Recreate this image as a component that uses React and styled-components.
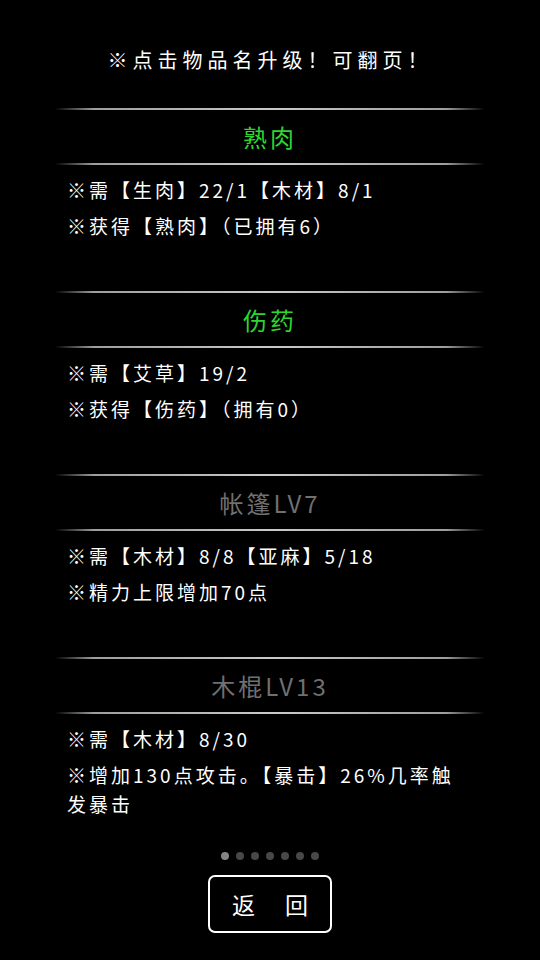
import React from "react";
import styled, { createGlobalStyle } from "styled-components";

const GlobalStyle = createGlobalStyle`
  html, body {
    margin: 0;
    padding: 0;
    background: #000;
  }
  body {
    font-family: "Noto Sans CJK SC", "Noto Sans", sans-serif;
    color: #fff;
  }
`;

const Page = styled.div`
  width: 540px;
  height: 960px;
  background: #000;
  display: flex;
  flex-direction: column;
  align-items: center;
  overflow: hidden;
`;

const Hint = styled.div`
  margin-top: 46px;
  margin-bottom: 34px;
  height: 28px;
  line-height: 28px;
  font-size: 20px;
  letter-spacing: 5px;
  color: #fff;
  text-align: center;
`;

const List = styled.div`
  width: 430px;
  display: flex;
  flex-direction: column;
  gap: 51px;
`;

const Section = styled.div`
  display: flex;
  flex-direction: column;
`;

const Divider = styled.div`
  height: 2px;
  background: linear-gradient(
    to right,
    rgba(160, 160, 160, 0) 0%,
    rgba(175, 175, 175, 0.9) 9%,
    #cacaca 50%,
    rgba(175, 175, 175, 0.9) 91%,
    rgba(160, 160, 160, 0) 100%
  );
`;

const Title = styled.div`
  height: 53px;
  line-height: 53px;
  text-align: center;
  font-size: 24px;
  letter-spacing: 3px;
  color: ${(p) => (p.$ready ? "#2fd62f" : "#707070")};
`;

const Body = styled.div`
  padding: 10px 0 0 12px;
  display: flex;
  flex-direction: column;
  gap: 7px;
`;

const Row = styled.div`
  font-size: 19px;
  line-height: 29px;
  letter-spacing: 3px;
  color: #fff;
  padding-right: 10px;
`;

const Dots = styled.div`
  margin-top: 34px;
  display: flex;
  gap: 7px;
`;

const Dot = styled.span`
  width: 8px;
  height: 8px;
  border-radius: 50%;
  background: ${(p) => (p.$active ? "#858585" : "#484848")};
`;

const BackButton = styled.button`
  margin-top: 15px;
  width: 124px;
  height: 58px;
  box-sizing: border-box;
  border: 2.5px solid #fff;
  border-radius: 7px;
  background: #000;
  color: #fff;
  font-family: inherit;
  font-size: 23px;
  padding: 0;
  display: flex;
  align-items: center;
  justify-content: center;
  gap: 30px;
  white-space: nowrap;
  cursor: pointer;
`;

const items = [
  {
    name: "熟肉",
    ready: true,
    rows: ["※需【生肉】22/1【木材】8/1", "※获得【熟肉】（已拥有6）"],
  },
  {
    name: "伤药",
    ready: true,
    rows: ["※需【艾草】19/2", "※获得【伤药】（拥有0）"],
  },
  {
    name: "帐篷LV7",
    ready: false,
    rows: ["※需【木材】8/8【亚麻】5/18", "※精力上限增加70点"],
  },
  {
    name: "木棍LV13",
    ready: false,
    rows: ["※需【木材】8/30", "※增加130点攻击。【暴击】26%几率触发暴击"],
  },
];

export default function App() {
  return (
    <Page>
      <GlobalStyle />
      <Hint>※点击物品名升级！可翻页！</Hint>
      <List>
        {items.map((item) => (
          <Section key={item.name}>
            <Divider />
            <Title $ready={item.ready}>{item.name}</Title>
            <Divider />
            <Body>
              {item.rows.map((r) => (
                <Row key={r}>{r}</Row>
              ))}
            </Body>
          </Section>
        ))}
      </List>
      <Dots>
        {[0, 1, 2, 3, 4, 5, 6].map((i) => (
          <Dot key={i} $active={i === 0} />
        ))}
      </Dots>
      <BackButton>
        <span>返</span>
        <span>回</span>
      </BackButton>
    </Page>
  );
}
